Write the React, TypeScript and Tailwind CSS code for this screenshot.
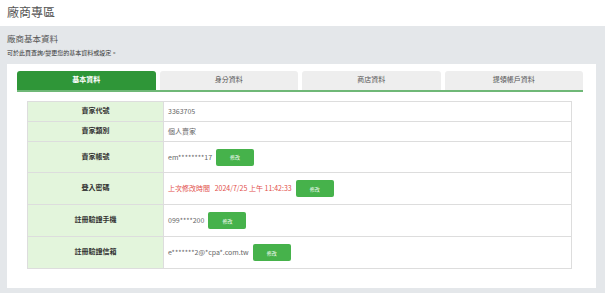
import React from 'react'

const font = { fontFamily: '"Open Sans", "Noto Sans CJK TC", sans-serif' }
const valueFont = { fontFamily: '"Noto Sans CJK TC", sans-serif' }

const tabs = ['基本資料', '身分資料', '商店資料', '提領帳戶資料']

function EditButton() {
  return (
    <button className="ml-[4px] flex h-[17px] w-[38px] shrink-0 items-center justify-center rounded-[2px] bg-[#46b24b] text-[5px] text-white">
      修改
    </button>
  )
}

interface Row {
  label: string
  value: React.ReactNode
  h: string
  edit?: boolean
}

const rows: Row[] = [
  { label: '賣家代號', value: '3363705', h: 'h-[20px]' },
  { label: '賣家類別', value: '個人賣家', h: 'h-[20px]' },
  { label: '賣家帳號', value: 'em********17', h: 'h-[31px]', edit: true },
  {
    label: '登入密碼',
    value: <span className="text-[#e2504c]">上次修改時間&nbsp;&nbsp;&nbsp;2024/7/25 上午 11:42:33</span>,
    h: 'h-[32px]',
    edit: true,
  },
  { label: '註冊驗證手機', value: '099****200', h: 'h-[32px]', edit: true },
  { label: '註冊驗證信箱', value: 'e*******2@*cpa*.com.tw', h: 'h-[32px]', edit: true },
]

export default function App() {
  return (
    <div className="h-[293px] w-[605px] overflow-hidden bg-[#e4e7ea]" style={font}>
      {/* header */}
      <div className="flex h-[26px] items-center bg-white px-[7px]">
        <h1 className="text-[12px] leading-none font-normal text-[#555]">廠商專區</h1>
      </div>

      <div className="px-[7px] pt-[8px]">
        <h2 className="text-[8.5px] leading-[10px] text-[#555]">廠商基本資料</h2>
        <p className="mt-[5px] text-[6px] leading-[8px] text-[#333]">可於此頁查詢/變更您的基本資料或設定。</p>
      </div>

      {/* panel */}
      <div className="mt-[7px] mr-[9px] ml-[7px] h-[224px] bg-white pt-[7px] pr-[13px] pl-[10px]">
        <div className="flex gap-[4px] border-b-2 border-[#6fb877]">
          {tabs.map((t, i) => (
            <div
              key={t}
              className={`flex h-[19px] flex-1 items-center justify-center rounded-t-[3px] text-[7px] ${
                i === 0 ? 'bg-[#2f9638] font-bold text-white' : 'bg-[#eeeeee] text-[#555]'
              }`}
            >
              {t}
            </div>
          ))}
        </div>

        <div className="pt-[9px] pr-[11px] pl-[10px]">
          <table className="w-full border-collapse text-[7px]">
            <tbody>
              {rows.map((r) => (
                <tr key={r.label} className={r.h}>
                  <td className="w-[136px] border border-[#dddddd] bg-[#e3f5dc] text-center font-bold text-[#333]">
                    {r.label}
                  </td>
                  <td className="border border-[#dddddd] pl-[4px] text-[#666]" style={valueFont}>
                    <div className="flex items-center">
                      <span>{r.value}</span>
                      {r.edit && <EditButton />}
                    </div>
                  </td>
                </tr>
              ))}
            </tbody>
          </table>
        </div>
      </div>
    </div>
  )
}
